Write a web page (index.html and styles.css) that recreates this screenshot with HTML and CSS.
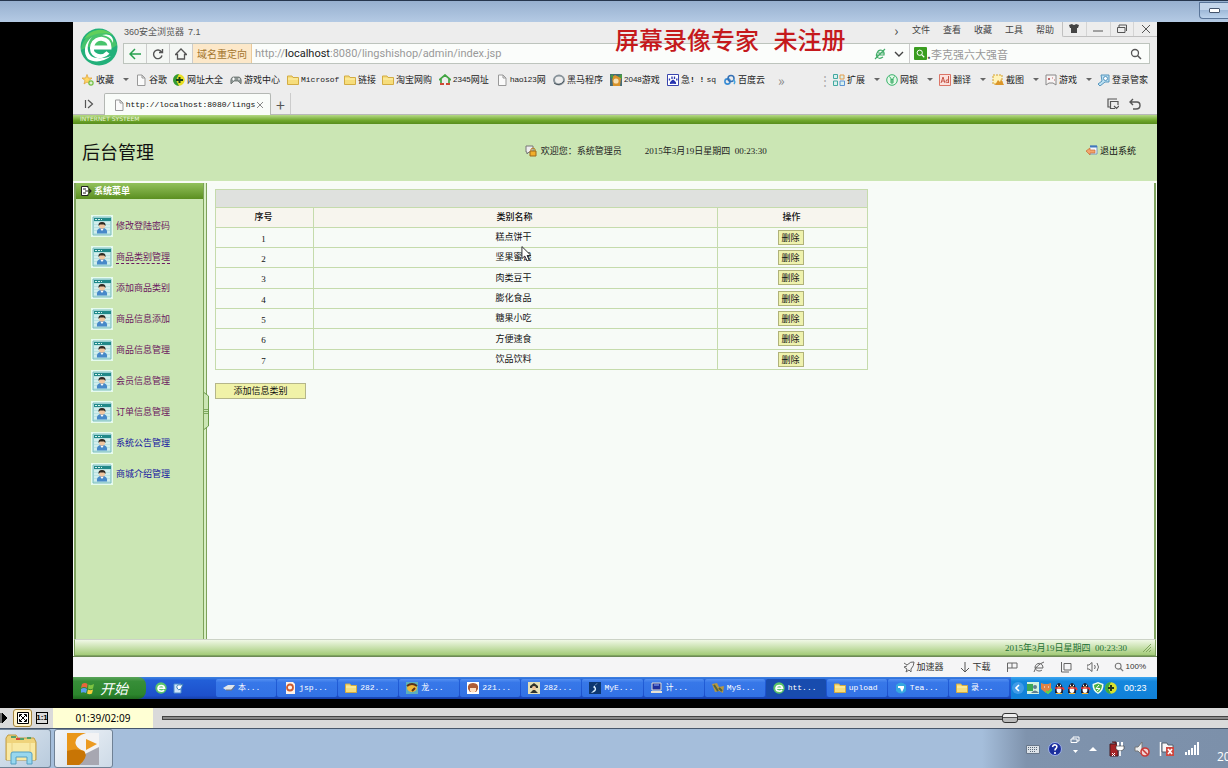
FILE: index.html
```html
<!DOCTYPE html>
<html lang="zh-CN">
<head>
<meta charset="utf-8">
<title>后台管理</title>
<link rel="stylesheet" href="styles.css">
</head>
<body>
<svg class="defs" aria-hidden="true">
  <symbol id="e-logo" viewBox="0 0 38 38"><circle cx="19" cy="19" r="18.500" fill="#22b07a"/><path d="M1 22A18.500 18.500 0 0 1 37 17Q28 24 19 20Q10 16 1 22" fill="#48c46c"/><path d="M4 11A18.500 18.500 0 0 1 33 7Q20 2 4 11" fill="#62cf5c"/><path d="M12 19.500H29.500C30 9 16 8 12.500 17C9 27 21 32 28 24.500" fill="none" stroke="#fff" stroke-width="4"/><path d="M12 9C4 15 3 25 8 31C14 35 24 34 31 28C24 31 15 31 11 28C6 23 7 15 12 9ZM22 7C29 5 34 8 33 15C31 10 28 8 22 7" fill="#fff"/></symbol>
  <symbol id="e-green" viewBox="0 0 12 12"><circle cx="6" cy="6" r="5.700" fill="#5cc46a"/><path d="M3 6.200H9.500C9 2.500 3.500 2.500 3 6.200C3 9.500 7.500 10 9 8" fill="none" stroke="#fff" stroke-width="1.600"/></symbol>
  <symbol id="page" viewBox="0 0 12 12"><path d="M2.500 1H7L10 4V11.500H2.500ZM7 1V4H10" fill="#fafafa" stroke="#999"/></symbol>
  <symbol id="folder" viewBox="0 0 12 12"><path d="M.5 2H5L6 3.500H11.500V10.500H.5Z" fill="#f6dd7c" stroke="#d3ac43"/><path d="M1 5H11" stroke="#fff3b0"/></symbol>
  <symbol id="star" viewBox="0 0 12 12"><path d="M5 .5L6.300 4H10L7 6.500L8 10L5 8L2 10L3 6.500L0 4H3.700Z" fill="#ffd766" stroke="#dc9d32" stroke-width=".7"/><circle cx="9" cy="9" r="2.700" fill="#74c044"/><path d="M7.500 9H10.500M9 7.500V10.500" stroke="#fff"/></symbol>
  <symbol id="dict" viewBox="0 0 12 12"><circle cx="6" cy="6" r="5.700" fill="#e8df23"/><path d="M0 6A6 6 0 0 1 6 0L3 6L6 12A6 6 0 0 1 0 6" fill="#329a36"/><path d="M3 6H10M6.500 3V9" stroke="#163f18" stroke-width="2"/></symbol>
  <symbol id="pad" viewBox="0 0 12 12"><path d="M1 10Q0 4 3 3H9Q12 4 11 10L8 7H4Z" fill="#8f9896" stroke="#59625f" stroke-width=".7"/><path d="M2 5H5M3.500 3.500V6.500M8 5H10" stroke="#fff"/></symbol>
  <symbol id="house" viewBox="0 0 12 12"><path d="M0 6L6 1L12 6M2 5V9M10 5V9" fill="none" stroke="#42a543" stroke-width="1.700"/><path d="M1 10H5M7 10H11" stroke="#cf4a35" stroke-width="2"/></symbol>
  <symbol id="ring" viewBox="0 0 12 12"><ellipse cx="6" cy="6" rx="5" ry="4.400" fill="none" stroke="#89949b" stroke-width="2"/><path d="M1 9Q6 13 11 7" fill="none" stroke="#4d5961"/></symbol>
  <symbol id="g2048" viewBox="0 0 12 12"><path d="M0 0H12V12H0Z" fill="#446b79"/><path d="M2 3L5 1L11 4L10 12H3Z" fill="#d8932b"/><circle cx="6" cy="7" r="2.600" fill="#f8dfb1"/><path d="M0 2L3 0V5M8 2L12 0V5" fill="#4a9b44"/></symbol>
  <symbol id="paw" viewBox="0 0 12 12"><path d="M.5.500H11.500V11.500H.5Z" fill="#fff" stroke="#3945ae"/><path d="M6 5.500Q10 8 9 10Q6 9.500 3 10Q2 8 6 5.500" fill="#2634af"/><path d="M2.500 4.500V6.500M5 2.500V5M7.500 2.500V5M9.800 4.500V6.500" stroke="#2634af" stroke-width="1.300"/></symbol>
  <symbol id="cloud" viewBox="0 0 12 12"><circle cx="3.500" cy="7.500" r="2.600" fill="none" stroke="#3a8dd5" stroke-width="1.600"/><circle cx="7" cy="4.500" r="3" fill="none" stroke="#3570b4" stroke-width="1.500"/><path d="M9 6Q12 7 10 10" fill="none" stroke="#49a5df" stroke-width="1.500"/></symbol>
  <symbol id="ext" viewBox="0 0 12 12"><g fill="#d9f1ef" stroke="#43a9a0"><path d="M.5.500H4.500V4.500H.5ZM.5 7H4.500V11.500H.5Z"/><path d="M7 7H11.500V11.500H7Z" stroke="#5c94d4"/><path d="M7 1H11V5H7Z" stroke="#e49b4b"/></g></symbol>
  <symbol id="yen" viewBox="0 0 12 12"><circle cx="6" cy="6" r="5.300" fill="#e4f8e8" stroke="#3ab36c"/><path d="M3.500 2.500L6 6L8.500 2.500M6 6V10M4 6H8M4 8H8" fill="none" stroke="#30a961"/></symbol>
  <symbol id="trans" viewBox="0 0 12 12"><path d="M.5.500H11.500V11.500H.5Z" fill="#fbe1dd" stroke="#dc7567"/><path d="M2 9L4 3L6 9M3 7H5M9.500 2V9M9.500 6Q7 5 7 7.500Q7 9.500 9.500 8" fill="none" stroke="#c75749"/></symbol>
  <symbol id="snip" viewBox="0 0 12 12"><path d="M1 1H10V10H1Z" fill="#fff3b9" stroke="#d4a031" stroke-dasharray="2 1"/><path d="M3 11L6 6L8 8L9 5L12 11Z" fill="#dc9629"/></symbol>
  <symbol id="joy" viewBox="0 0 12 12"><path d="M1 1H11V11L8 9H4L1 11Z" fill="#f8f4f4" stroke="#888"/><path d="M3 4L5 6M5 4L3 6M7 4H8M9 6H10" stroke="#c26767"/></symbol>
  <symbol id="key" viewBox="0 0 12 12"><path d="M3 1H11V8H7L2 12L0 10L4 7Z" fill="#bce1f3" stroke="#5595bd"/><circle cx="7.500" cy="4.500" r="2" fill="#fff" stroke="#5595bd"/></symbol>
  <symbol id="mag" viewBox="0 0 12 12"><circle cx="5" cy="5" r="3.500" fill="none" stroke="currentColor" stroke-width="1.300"/><path d="M7.500 7.500L11 11" stroke="currentColor" stroke-width="1.500"/></symbol>
  <symbol id="user" viewBox="0 0 22 22"><path d="M0 0H22V22H0Z" fill="#e6fbef"/><path d="M2 2H20V20H2Z" fill="#b9e2e2" stroke="#7dbebf"/><path d="M3 3H20V6H3Z" fill="#218989"/><path d="M4 4.500H11" stroke="#d5f1ed" stroke-dasharray="2 1"/><path d="M3 8H19M3 11H19M3 14H19M3 17H19" stroke="#eafaf7"/><path d="M6 18.500Q5 13 11 13Q17 13 16 18.500Z" fill="#4789c9"/><path d="M9.500 14L11 16L12.500 14" fill="#fff"/><circle cx="11" cy="10.800" r="3" fill="#f1c6a0"/><path d="M7.500 11Q7 7 11 7Q15 7 14.500 11L13 9.500H9Z" fill="#302821"/></symbol>
  <symbol id="peng" viewBox="0 0 12 12"><path d="M2 11Q2 1 6 1Q10 1 10 11Z" fill="#1d1c30"/><ellipse cx="6" cy="8" rx="2.400" ry="3" fill="#fff"/><path d="M4 3.500H5M7 3.500H8" stroke="#fff" stroke-width="1.500"/><path d="M2 6H10L11 8" stroke="#e83838" stroke-width="1.700" fill="none"/><path d="M3 11.500H9M5 5H7" stroke="#f7b52d" stroke-width="1.200"/></symbol>
</svg>

<header class="outer-bar"><button class="outer-min" aria-label="最小化"><i></i></button></header>

<main class="stage">
 <div class="screen">
  <div class="watermark">屏幕录像专家 未注册</div>

  <section class="browser">
   <div class="brow-top">
    <svg class="logo"><use href="#e-logo"/></svg>
    <div class="brow-lines">
     <div class="title-row">
      <span class="app-name"><span class="sim">360</span>安全浏览器  <span class="sim">7.1</span></span>
      <nav class="menu"><button class="chev">›</button><button>文件</button><button>查看</button><button>收藏</button><button>工具</button><button>帮助</button></nav>
      <div class="win-btns">
       <button aria-label="皮肤"><svg viewBox="0 0 10 10"><path d="M0 1L3 0Q5 2 7 0L10 1L9 4H8V9H2V4H1Z" fill="#444"/></svg></button>
       <button aria-label="最小化"><svg viewBox="0 0 10 10"><path d="M0 7H10" stroke="#555"/></svg></button>
       <button aria-label="还原"><svg viewBox="0 0 10 10"><path d="M2 3V1H9.500V7M.5 3.500H8V8.500H.5Z" fill="none" stroke="#555"/></svg></button>
       <button aria-label="关闭"><svg viewBox="0 0 10 10"><path d="M1 1L9 9M9 1L1 9" stroke="#555"/></svg></button>
      </div>
     </div>
     <div class="address">
      <button class="nav-btn" aria-label="后退"><svg viewBox="0 0 12 12"><path d="M12 6H1M6 1L1 6L6 11" fill="none" stroke="#27a04e" stroke-width="1.500"/></svg></button>
      <button class="nav-btn" aria-label="刷新"><svg viewBox="0 0 12 12"><path d="M9.500 4A4.300 4.300 0 1 0 10 7.500M10.500 1V4.500H7" fill="none" stroke="#555" stroke-width="1.400"/></svg></button>
      <button class="nav-btn" aria-label="主页"><svg viewBox="0 0 12 12"><path d="M.5 6.500L6 1L11.500 6.500H9.500V11H2.500V6.500Z" fill="none" stroke="#555" stroke-width="1.300"/></svg></button>
      <span class="redirect">域名重定向</span>
      <span class="url">http://<b>localhost</b>:8080/lingshishop/admin/index.jsp</span>
      <svg class="i12" viewBox="0 0 12 12"><path d="M2 7H10C11 2 5 0 3 5C1 9 5 12 9 9M1 11L11 1M4 5H10" fill="none" stroke="#43ad69" stroke-width="1.200"/></svg>
      <button class="drop" aria-label="展开"><svg viewBox="0 0 10 10"><path d="M1 3L5 7L9 3" fill="none" stroke="#444" stroke-width="1.400"/></svg></button>
      <div class="search"><span class="s-icon"><svg><use href="#mag"/></svg></span><i>.</i><input type="text" aria-label="搜索" placeholder="李克强六大强音"><button aria-label="搜索"><svg><use href="#mag"/></svg></button></div>
     </div>
    </div>
   </div>

   <div class="marks">
    <a class="w2 fav"><svg><use href="#star"/></svg>收藏<em></em></a>
    <a class="w2"><svg><use href="#page"/></svg>谷歌</a>
    <a class="w4"><svg><use href="#dict"/></svg>网址大全</a>
    <a class="w4"><svg><use href="#pad"/></svg>游戏中心</a>
    <a class="w4"><svg><use href="#folder"/></svg><span class="mono">Microsof</span></a>
    <a class="w2"><svg><use href="#folder"/></svg>链接</a>
    <a class="w4"><svg><use href="#folder"/></svg>淘宝网购</a>
    <a class="w4"><svg><use href="#house"/></svg><span class="sim">2345</span>网址</a>
    <a class="w4"><svg><use href="#page"/></svg><span class="sim">hao123</span>网</a>
    <a class="w4"><svg><use href="#ring"/></svg>黑马程序</a>
    <a class="w4"><svg><use href="#g2048"/></svg><span class="sim">2048</span>游戏</a>
    <a class="w4"><svg><use href="#paw"/></svg>急<b class="mono">! !</b>&nbsp;<span class="mono">sq</span></a>
    <a class="w3"><svg><use href="#cloud"/></svg>百度云</a>
    <a class="more">»</a>
    <span class="tools">
     <span class="dots">⋮</span>
     <a class="tool"><svg><use href="#ext"/></svg>扩展<em></em></a>
     <a class="tool"><svg><use href="#yen"/></svg>网银<em></em></a>
     <a class="tool"><svg><use href="#trans"/></svg>翻译<em></em></a>
     <a class="tool"><svg><use href="#snip"/></svg>截图<em></em></a>
     <a class="tool"><svg><use href="#joy"/></svg>游戏<em></em></a>
     <a class="login"><svg><use href="#key"/></svg>登录管家</a>
    </span>
   </div>

   <div class="tabs">
    <button class="side" aria-label="侧栏"><svg viewBox="0 0 10 10"><path d="M1.500 1V9M4 1L8.500 5L4 9" fill="none" stroke="#555" stroke-width="1.200"/></svg></button>
    <div class="tab"><svg class="i12"><use href="#page"/></svg><span class="mono">http://localhost:8080/lings</span><button aria-label="关闭标签"><svg viewBox="0 0 8 8"><path d="M1 1L7 7M7 1L1 7" stroke="#888"/></svg></button></div>
    <button class="plus" aria-label="新标签">+</button>
    <span class="tab-tools">
     <svg class="i12" viewBox="0 0 12 12"><path d="M3 9H1V1H10M11 7V3.500H3.500V10.500H8M7 8L9.500 10.500L12 8" fill="none" stroke="#555" stroke-width="1.200"/></svg>
     <svg class="i12" viewBox="0 0 12 12"><path d="M4 1L1 4L4 7M1 4H8Q11 4 11 7.500Q11 11 7 11H4" fill="none" stroke="#555" stroke-width="1.400"/></svg>
    </span>
   </div>
  </section>

  <section class="page">
   <div class="strip"><span>INTERNET SYSTEEM</span></div>
   <header class="page-head">
    <h1>后台管理</h1>
    <p class="hello"><svg class="i12" viewBox="0 0 12 12"><path d="M1 1H8V7H4L2 9V7H1Z" fill="#eee" stroke="#777"/><path d="M6 6V4Q8 2 10 4V6" fill="none" stroke="#b57a1d"/><path d="M5 6H11V11H5Z" fill="#f1ae2b" stroke="#9d681b"/></svg>欢迎您：系统管理员</p>
    <time>2015年3月19日星期四 &nbsp;00:23:30</time>
    <a class="logout" href="#"><svg class="i12" viewBox="0 0 12 12"><path d="M4 1H11V9H4" fill="#f4f8ff" stroke="#7798bd"/><path d="M4 1.500H11" stroke="#4078bd" stroke-width="2"/><path d="M0 6L4 3V5H9V8H4V10Z" fill="#f3a56b" stroke="#c66c37" stroke-width=".7"/></svg>退出系统</a>
   </header>
   <div class="page-body">
    <aside class="sidebar">
     <h2><svg class="i12" viewBox="0 0 12 12"><path d="M8 3V1.500H1.500V10.500H8V9" fill="#fff" stroke="#222"/><path d="M3 4H6M3 8H6M5 6H11M8.500 3.500L11 6L8.500 8.500" fill="none" stroke="#222" stroke-width="1.200"/></svg>系统菜单</h2>
     <ul>
      <li><a href="#"><svg><use href="#user"/></svg>修改登陆密码</a></li>
      <li><a href="#" class="on"><svg><use href="#user"/></svg><span>商品类别管理</span></a></li>
      <li><a href="#"><svg><use href="#user"/></svg>添加商品类别</a></li>
      <li><a href="#"><svg><use href="#user"/></svg>商品信息添加</a></li>
      <li><a href="#"><svg><use href="#user"/></svg>商品信息管理</a></li>
      <li><a href="#"><svg><use href="#user"/></svg>会员信息管理</a></li>
      <li><a href="#"><svg><use href="#user"/></svg>订单信息管理</a></li>
      <li><a href="#" class="new"><svg><use href="#user"/></svg>系统公告管理</a></li>
      <li><a href="#" class="new"><svg><use href="#user"/></svg>商城介绍管理</a></li>
     </ul>
    </aside>
    <div class="split"><svg viewBox="0 0 5 38"><path d="M0 .5L4.500 4V34L0 37.500" fill="#cbe6b4" stroke="#6a9a4a"/><path d="M0 17.500H4M0 19.500H4M0 21.500H4" stroke="#6a9a4a" stroke-width=".8"/></svg></div>
    <div class="content">
     <table>
      <colgroup><col class="c1"><col class="c2"><col class="c3"></colgroup>
      <thead>
       <tr class="bar"><td colspan="3"></td></tr>
       <tr class="cols"><th>序号</th><th>类别名称</th><th>操作</th></tr>
      </thead>
      <tbody>
       <tr><td>1</td><td>糕点饼干</td><td><button>删除</button></td></tr>
       <tr><td>2</td><td><span class="pointed">坚果蜜饯<svg viewBox="0 0 9 14"><path d="M.5.500V11L3 8.800L5 13L6.800 12.200L5 8.300H8.400Z" fill="#fff" stroke="#222" stroke-width=".8"/></svg></span></td><td><button>删除</button></td></tr>
       <tr><td>3</td><td>肉类豆干</td><td><button>删除</button></td></tr>
       <tr><td>4</td><td>膨化食品</td><td><button>删除</button></td></tr>
       <tr><td>5</td><td>糖果小吃</td><td><button>删除</button></td></tr>
       <tr><td>6</td><td>方便速食</td><td><button>删除</button></td></tr>
       <tr><td>7</td><td>饮品饮料</td><td><button>删除</button></td></tr>
      </tbody>
     </table>
     <button class="add">添加信息类别</button>
    </div>
   </div>
   <footer class="page-foot"><time>2015年3月19日星期四 &nbsp;00:23:30</time><svg viewBox="0 0 8 8"><path d="M0 8L8 0M3 8L8 3M6 8L8 6" stroke="#80a65c"/></svg></footer>
  </section>

  <div class="status">
   <span><svg viewBox="0 0 12 12"><path d="M1 2L4 4Q8 0 11 1Q11 5 8 8V11L6 9L3 11L4 8L1 6L4 5" fill="none" stroke="#666"/></svg>加速器</span>
   <span><svg viewBox="0 0 12 12"><path d="M6 1V11M2 7L6 11L10 7" fill="none" stroke="#555"/></svg>下载</span>
   <svg viewBox="0 0 12 12"><path d="M1.500 11V2H11V7H2M6 2V7" fill="none" stroke="#666"/></svg>
   <svg viewBox="0 0 12 12"><path d="M2 7H10C10 1 3 1 2 6C2 10 7 11 9 9M1 11Q3 4 11 1" fill="none" stroke="#666"/></svg>
   <svg viewBox="0 0 12 12"><path d="M4 2.500H11V9H4ZM1.500 1V11H9" fill="none" stroke="#666"/></svg>
   <svg viewBox="0 0 12 12"><path d="M0 4H2L5 1.500V10.500L2 8H0ZM7.500 4Q9 6 7.500 8M10 2Q13 6 10 10" fill="none" stroke="#666"/></svg>
   <span class="pct"><svg><use href="#mag"/></svg>100%</span>
  </div>

  <div class="xp">
   <button class="start"><svg viewBox="0 0 14 14"><path d="M1 3Q4 1 6.500 3L6 7Q3 5 0 7Z" fill="#e9663b"/><path d="M7.500 3.500Q10 5 13 3L12 7.500Q9.500 9 7 7.500Z" fill="#7fc442"/><path d="M0 8Q3 6 6 8L5 12Q2.500 10.500-1 12Z" fill="#58a1ef"/><path d="M7 8.500Q9 10 12 8.500L11 12.500Q8.500 14 6 12.500Z" fill="#f6ce3a"/></svg>开始</button>
   <div class="quick"><svg><use href="#e-green"/></svg><svg viewBox="0 0 12 12"><path d="M2 2H9V11H2Z" fill="#cfe6fa" stroke="#5290cc"/><path d="M9 3Q4 2 5 6Q6 9 9 7L11 2Z" fill="#fff" stroke="#397fba"/></svg></div>
   <div class="tasks">
    <button><svg viewBox="0 0 12 12"><path d="M0 6L5 3H12L8 8H3Z" fill="#e0e6ea"/><path d="M3 8H9L12 4" stroke="#777" fill="none"/></svg>本...</button>
    <button><svg viewBox="0 0 12 12"><path d="M2 0H9L11 2V12H2Z" fill="#fff3e8"/><circle cx="6" cy="5.500" r="3" fill="none" stroke="#cd5b2f" stroke-width="1.800"/></svg>jsp...</button>
    <button><svg><use href="#folder"/></svg>282...</button>
    <button><svg viewBox="0 0 12 12"><path d="M0 0H12V12H0Z" fill="#5cafbd"/><ellipse cx="6" cy="6" rx="5" ry="4" fill="#f0b83a"/><path d="M1 4Q6 0 11 4M6 9L9 6" fill="none" stroke="#5b3319" stroke-width="2"/></svg>龙...</button>
    <button><svg viewBox="0 0 12 12"><path d="M0 0H12V12H0Z" fill="#fff"/><path d="M1 7Q0 1 6 1Q12 1 11 7L9 10H3Z" fill="#ad5c37"/><path d="M3 6H9V9Q6 12 3 9Z" fill="#ffe0c2"/></svg>221...</button>
    <button><svg viewBox="0 0 12 12"><path d="M0 0H12V12H0Z" fill="#e6e0b6"/><path d="M2 4L6 1L10 4V6H2ZM2 11L5 8H7L10 11Z" fill="#31342d"/><circle cx="6" cy="6" r="2" fill="#f2c69c"/></svg>282...</button>
    <button><svg viewBox="0 0 12 12"><path d="M0 0H12V12H0Z" fill="#0d3770"/><path d="M9 1Q4 3 7 6Q8 10 2 11L6 7L4 5Z" fill="#dbefff"/></svg>MyE...</button>
    <button><svg viewBox="0 0 12 12"><path d="M1 1H10V8H1Z" fill="#202f9b" stroke="#e7e2d2"/><path d="M0 10H11" stroke="#e7e2d2" stroke-width="2"/><path d="M3 3H8" stroke="#8fb2ff"/></svg>计...</button>
    <button><svg viewBox="0 0 12 12"><path d="M0 2L5 1L7 5L12 4L11 11L7 9L3 10Z" fill="#b79940"/><path d="M2 3L6 9M7 6L10 9" stroke="#54633b" stroke-width="2"/></svg>MyS...</button>
    <button class="active"><svg><use href="#e-green"/></svg>htt...</button>
    <button><svg><use href="#folder"/></svg>upload</button>
    <button><svg viewBox="0 0 12 12"><path d="M1 3Q6-2 11 3V9Q6 14 1 9Z" fill="#35a7de"/><path d="M3 4H9V6H3ZM5 6H9L7 10Z" fill="#fff"/></svg>Tea...</button>
    <button><svg><use href="#folder"/></svg>录...</button>
   </div>
   <div class="xp-tray">
    <button class="back" aria-label="显示图标"><svg viewBox="0 0 12 12"><path d="M7 3L4 6L7 9" fill="none" stroke="#fff" stroke-width="1.600"/></svg></button>
    <svg viewBox="0 0 12 12"><path d="M0 0H12V12H0Z" fill="#d5f2de"/><path d="M0 2H6V9H0Z" fill="#3ca856"/><circle cx="8" cy="5" r="2" fill="#607e90"/><path d="M4 11Q8 6 12 11" fill="#607e90"/></svg>
    <svg viewBox="0 0 12 12"><path d="M1 1L4 2H8L11 1V7L6 11L1 7Z" fill="#e18344"/><path d="M4 5H5M8 5H9" stroke="#fff"/><path d="M6 9L8 11L12 7" fill="none" stroke="#61d34b" stroke-width="2"/></svg>
    <svg><use href="#peng"/></svg><svg><use href="#peng"/></svg><svg><use href="#peng"/></svg>
    <svg viewBox="0 0 12 12"><path d="M6 0L11.500 2Q12 9 6 12Q0 9 .5 2Z" fill="#f4fff0"/><path d="M6 1.500L10 3Q10 8 6 10.500Q2 8 2 3Z" fill="#4aaf47"/><path d="M7 3L4 6.500H8L5 9" fill="none" stroke="#fff"/></svg>
    <svg viewBox="0 0 12 12"><circle cx="6" cy="6" r="5.800" fill="#d9e22d"/><path d="M6 0A6 6 0 0 0 6 12L3 6Z" fill="#3ba943"/><path d="M3 6H9M6 3V9" stroke="#263817" stroke-width="2"/></svg>
    <time>00:23</time>
   </div>
  </div>
 </div>
</main>

<div class="player">
 <button aria-label="播放"><svg viewBox="0 0 8 12"><path d="M0 1V11M2 1L7 6L2 11Z" fill="#000" stroke="#000"/></svg></button>
 <button class="fit" aria-label="适应窗口"><svg viewBox="0 0 12 12"><path d="M.5.500H11.500V11.500H.5Z" fill="#fff" stroke="#000"/><path d="M3 3L9 9M9 3L3 9M2.500 5V2.500H5M7 2.500H9.500V5M9.500 7V9.500H7M5 9.500H2.500V7" fill="none" stroke="#000"/></svg></button>
 <button class="one">1:1</button>
 <output>01:39/02:09</output>
 <input type="range" min="0" max="1000" value="800" aria-label="播放进度">
</div>

<footer class="dock">
 <button class="app" aria-label="资源管理器"><svg viewBox="0 0 34 32"><path d="M2 5L4 2H12L14 5H30L32 9V27H2Z" fill="#efd37b" stroke="#bf9b44"/><path d="M7 4H12M15 6H20M23 5H27" stroke="#56a16b" stroke-width="2"/><path d="M12 6H16" stroke="#d54b3c" stroke-width="2"/><path d="M3 10H31V27H3Z" fill="#f9e9a4"/><path d="M8 10V26M26 10V26" stroke="#ead080"/><path d="M7 31V21Q7 19 9 19H25Q28 19 28 21V31H23V24H12V31Z" fill="#98d7ef" stroke="#559fc3"/></svg></button>
 <button class="app wide" aria-label="播放器"><svg viewBox="0 0 32 32"><path d="M0 0H32V32H0Z" fill="#f3f3f4"/><path d="M16 22L32 14V32H12Z" fill="#a7a7b1"/><path d="M0 0H19Q6 4 9 12Q11 16 17 18Q21 24 12 32H0Z" fill="#e99619"/><path d="M0 18Q8 15 17 18Q22 24 12 32H0Z" fill="#c87505"/><path d="M19 6L30 11L19 17Z" fill="#ec9b22"/></svg></button>
 <div class="tray">
  <svg class="t14" viewBox="0 0 14 14"><path d="M.5 3.500H13.500V11.500H.5Z" fill="#dce2e8" stroke="#68778a"/><path d="M2 5.500H12M2 7.500H12M4 9.500H10" stroke="#59687a" stroke-dasharray="1 1"/></svg>
  <svg class="t14" viewBox="0 0 14 14"><circle cx="7" cy="7" r="6.500" fill="#1b2e9d" stroke="#9db1e8"/><path d="M4.500 5Q5 2.500 7.500 3Q10 4 8 6.500Q7 7 7 8.500M7 10V12" fill="none" stroke="#fff" stroke-width="1.600"/></svg>
  <svg class="lang" viewBox="0 0 10 18"><path d="M3 3V1H9V5H7M1 3H7V6.500H1Z" fill="none" stroke="#fff"/><path d="M3 14H8L5.500 17Z" fill="#fff"/></svg>
  <svg class="up" viewBox="0 0 8 8"><path d="M0 6L4 2L8 6Z" fill="#fff"/></svg>
  <svg class="t16" viewBox="0 0 16 16"><path d="M1 3H9V15H1ZM3 1H7V3" fill="#a52427" stroke="#471d23"/><path d="M9 1V5M13 1V5" stroke="#fff" stroke-width="2"/><path d="M7 5H15V8Q11 12 7 8Z" fill="#fff" stroke="#333" stroke-width=".6"/><path d="M11 10V15" stroke="#fff" stroke-width="1.600"/><path d="M3 12L6 15M6 12L3 15" stroke="#fff"/></svg>
  <svg class="t16" viewBox="0 0 16 16"><path d="M1 6H4L8 1V14L4 10H1Z" fill="#eee" stroke="#777"/><circle cx="11" cy="11" r="4" fill="#f2d5d4" stroke="#c83a38" stroke-width="1.600"/><path d="M8 8L14 14" stroke="#c83a38" stroke-width="1.600"/></svg>
  <svg class="t16" viewBox="0 0 16 16"><path d="M1.500 1V15" stroke="#fff" stroke-width="1.500"/><path d="M3 2H8L9 4H14V11H3Z" fill="#f6f6f8" stroke="#56606d"/><path d="M7 6H15V15H7Z" fill="#cf4840"/><path d="M9 8L13 13M13 8L9 13" stroke="#fff" stroke-width="1.600"/></svg>
  <svg class="t16" viewBox="0 0 16 16"><path d="M2 14V11M5 14V9M8 14V7M11 14V4M14 14V1" stroke="#fff" stroke-width="2"/></svg>
  <time>20</time>
 </div>
</footer>
</body>
</html>
```
FILE: styles.css
```css
* { box-sizing: border-box; }
body {
  margin: 0;
  height: 100vh;
  display: flex;
  flex-direction: column;
  overflow: hidden;
  background: #000;
  color: #222;
  font: 9px/12px "Noto Sans CJK SC", sans-serif;
}
button, input { font: inherit; color: inherit; padding: 0; margin: 0; border: 0; background: none; }
h1, h2, p, ul { margin: 0; padding: 0; font-weight: normal; }
ul { list-style: none; }
a { color: inherit; text-decoration: none; }
svg { display: block; flex: none; width: 12px; height: 12px; }
.defs { position: absolute; width: 0; height: 0; }
.i12 { width: 12px; height: 12px; }
.sim { font-family: "Liberation Sans", sans-serif; font-size: 8px; }
.mono { font-family: "Liberation Mono", monospace; font-size: 8px; }

/* outer window */
.outer-bar {
  flex: none;
  height: 22px;
  border-top: 1px solid #26364d;
  background: linear-gradient(#97b0cf, #b4cae4);
  display: flex;
  justify-content: flex-end;
}
.outer-min {
  width: 29px;
  height: 17px;
  margin-top: 1px;
  border: 1px solid #5a7599;
  border-right: 0;
  border-radius: 0 0 0 4px;
  background: linear-gradient(#c3d5ea 50%, #9fb9d8 50%, #bcd3ec);
  display: flex;
  justify-content: center;
  align-items: center;
}
.outer-min i { width: 11px; height: 5px; border: 1px solid #44546c; background: #fff; border-radius: 1px; }

.stage { flex: 1; min-height: 0; display: flex; padding: 0 71px 9px 73px; }
.screen { position: relative; flex: 1; min-width: 0; display: flex; flex-direction: column; background: #f7fbf6; }
.watermark {
  position: absolute;
  left: 50%;
  top: 5px;
  font: 500 24px/32px "Liberation Mono", "Noto Sans CJK SC", monospace;
  color: #c5191c;
  white-space: nowrap;
}

/* browser chrome */
.browser { flex: none; background: #ededed; }
.brow-top { display: flex; padding: 0 7px 0 7px; gap: 5px; }
.logo { width: 38px; height: 38px; margin-top: 6px; }
.brow-lines { flex: 1; min-width: 0; }
.title-row { display: flex; height: 21px; align-items: flex-start; margin-right: -7px; }
.app-name { padding: 4px 0 0 1px; color: #555; white-space: pre; }
.app-name .sim { font-size: 9px; }
.menu { margin-left: auto; display: flex; gap: 13px; padding: 2px 8px 0 0; color: #444; }
.menu button { height: 12px; }
.menu .chev { font-size: 14px; line-height: 10px; width: 5px; }
.win-btns { display: flex; width: 95px; height: 15px; border: 1px solid #c0c0c0; border-width: 0 0 1px 1px; border-radius: 0 0 0 2px; }
.win-btns button { flex: 1; display: flex; justify-content: center; align-items: center; }
.win-btns button + button { border-left: 1px solid #d4d4d4; }
.win-btns svg { width: 10px; height: 10px; }
.address { display: flex; align-items: center; height: 21px; background: #fbfdfb; border: 1px solid #bdc4bd; }
.nav-btn { width: 23px; height: 19px; border-right: 1px solid #ccc; background: #f4f7f4; display: flex; justify-content: center; align-items: center; }
.redirect { align-self: stretch; flex: none; padding: 0 4px; background: #fce8c9; border-right: 1px solid #eac99a; color: #a4762f; font-size: 10px; line-height: 19px; }
.url { flex: 1; min-width: 0; padding-left: 3px; font: 11px/19px Roboto, sans-serif; color: #999; white-space: nowrap; overflow: hidden; }
.url b { font-weight: normal; color: #222; }
.drop { width: 22px; height: 19px; margin-left: 2px; border-right: 1px solid #ccc; display: flex; justify-content: center; align-items: center; }
.drop svg { width: 10px; height: 10px; }
.search { width: 239px; padding: 0 7px 0 4px; display: flex; align-items: center; color: #555; }
.search input { flex: 1; min-width: 0; height: 19px; font-size: 11px; outline: 0; }
.search input::placeholder { color: #999; opacity: 1; }
.search i { font-size: 12px; font-style: normal; font-weight: bold; width: 4px; }
.s-icon { width: 13px; height: 13px; display: flex; justify-content: center; align-items: center; background: #3a9d20; color: #fff; border-radius: 1px; }
.s-icon svg { width: 9px; height: 9px; }
.marks { display: flex; align-items: center; height: 27px; padding: 0 9px; white-space: nowrap; }
.marks a { display: flex; align-items: center; flex: none; }
.marks a > svg { margin-right: 2px; }
.marks .w2 { width: 38px; }
.marks .w3 { width: 51px; }
.marks .w4 { width: 57px; }
.marks .w2.fav { width: 53px; }
em { width: 0; border: 3px solid transparent; border-top-color: #666; border-bottom: 0; margin-left: 9px; }
.marks .more { color: #888; font-size: 14px; margin-left: 3px; }
.tools { margin-left: auto; display: flex; align-items: center; }
.dots { width: 14px; color: #aaa; font-size: 12px; }
.marks .tool { width: 53px; }
.tabs { display: flex; height: 22px; border-bottom: 1px solid #b8b8b8; }
.side { width: 31px; display: flex; justify-content: center; align-items: center; }
.side svg { width: 10px; height: 10px; }
.tab { width: 167px; height: 22px; padding: 0 6px 0 8px; display: flex; align-items: center; justify-content: space-between; background: #f9fcf9; border: 1px solid #b4b8b4; border-bottom: 0; border-radius: 2px 2px 0 0; }
.tab span { white-space: nowrap; color: #111; }
.tab button svg { width: 8px; height: 8px; }
.plus { width: 20px; border-right: 1px solid #ccc; color: #555; font-size: 16px; }
.tab-tools { margin-left: auto; padding-right: 16px; display: flex; align-items: center; gap: 10px; }

/* admin page */
.page { flex: 1; min-height: 0; display: flex; flex-direction: column; border-bottom: 1px solid #6c8a56; }
.strip { flex: none; height: 9px; overflow: hidden; padding-left: 7px; background: linear-gradient(#b5da86, #6fa72c 60%, #578d1c); color: #eaf6da; font: 6px/7px "DejaVu Sans", sans-serif; }
.page-head { flex: none; height: 59px; padding: 0 21px 3px 9px; background: #cbe6b4; border-bottom: 2px solid #f9fcf7; display: flex; align-items: center; }
.page-head h1 { flex: 0 0 42%; font-size: 18px; line-height: 24px; color: #111; }
.hello, .logout { display: flex; align-items: center; gap: 4px; }
.hello { width: 120px; white-space: nowrap; }
time { font-family: "Liberation Serif", "Noto Sans CJK SC", serif; white-space: nowrap; }
.logout { margin-left: auto; gap: 2px; color: #111; }
.page-body { flex: 1; min-height: 0; display: flex; border: 1px solid #7fa35f; border-width: 0 2px; margin: 0 1px; }
.sidebar { width: 128px; background: #cbe6b4; border-right: 1px solid #7da25a; }
.sidebar h2 { height: 16px; padding-left: 4px; display: flex; align-items: center; gap: 2px; background: linear-gradient(#92c15c, #5b8f20); color: #fff; font-weight: bold; font-size: 9px; }
.sidebar ul { padding: 16px 0 0 15px; display: grid; gap: 9px; }
.sidebar a { display: flex; align-items: center; gap: 3px; color: #6c1860; }
.sidebar svg { width: 22px; height: 22px; }
.sidebar h2 svg { width: 12px; height: 12px; }
.sidebar a.new { color: #1414a0; }
.sidebar .on span { border-bottom: 1px dashed #6c1860; }
.split { width: 3px; background: #d8efc4; border-right: 1px solid #7da25a; display: flex; align-items: center; }
.split svg { position: relative; width: 5px; height: 38px; }
.content { flex: 1; min-width: 0; padding: 6px 8px; background: #f7fbf7; }
table { width: 100%; max-width: 653px; table-layout: fixed; border-collapse: collapse; color: #111; }
.c1 { width: 15%; }
.c3 { width: 23%; }
td, th { height: 20px; padding: 0; border: 1px solid #c5dbac; text-align: center; font-weight: normal; line-height: 12px; }
tbody tr:nth-child(3n) td { height: 21px; }
tbody td { padding: 0 4px 1px 0; }
tbody td:first-child { font-family: "Liberation Serif", serif; padding: 2px 2px 0 0; }
.bar td { height: 18px; background: #dfe1de; }
.cols th { background: #f7f5ee; font-weight: 500; padding: 0 2px 2px 0; }
td button { display: block; margin: 0 auto; width: 26px; height: 15px; line-height: 11px; border: 1px solid #b0b27a; background: #eff2ae; }
.pointed { position: relative; }
.pointed svg { position: absolute; right: -1px; top: -4px; width: 11px; height: 16px; }
.add { margin-top: 13px; width: 91px; height: 16px; line-height: 12px; border: 1px solid #b5b68a; background: #f0f2a8; color: #111; display: block; }
.page-foot { flex: none; height: 17px; margin: 0 1px; padding: 0 4px 0 0; display: flex; align-items: center; justify-content: flex-end; gap: 16px; border: 1px solid #7fa35f; border-top-color: #ccd3c6; background: linear-gradient(#f0f8e6, #a3cb78); color: #237034; }
.page-foot svg { width: 8px; height: 8px; }

.status { flex: none; height: 20px; padding-right: 11px; background: #f5f5f6; display: flex; align-items: center; justify-content: flex-end; gap: 15px; color: #333; }
.status span { display: flex; align-items: center; gap: 2px; }
.status .pct { font-family: "Liberation Sans", sans-serif; font-size: 8px; }
.status .pct svg { width: 10px; height: 10px; color: #777; }

/* recorded desktop taskbar */
.xp { flex: none; height: 22px; display: flex; background: linear-gradient(#3f83e0, #225fd8 15%, #1d50cb 85%, #163ea6); color: #fff; }
.start { width: 73px; display: flex; align-items: center; gap: 5px; padding-left: 8px; border-radius: 0 8px 8px 0; background: linear-gradient(#5aa45a, #378e38 20%, #2c852d 80%, #1f691f); font-size: 14px; font-style: italic; line-height: 20px; }
.start svg { width: 14px; height: 14px; }
.quick { width: 70px; padding-left: 9px; display: flex; align-items: center; gap: 5px; }
.tasks { flex: 1; min-width: 0; display: flex; gap: 1px; padding: 2px 0; }
.tasks button { flex: 1; min-width: 0; display: flex; align-items: center; gap: 3px; padding-left: 7px; background: linear-gradient(#5490f2, #3777e8 20%, #3272e5); border-radius: 2px; font-family: "Liberation Mono", "Noto Sans CJK SC", monospace; font-size: 8px; overflow: hidden; white-space: nowrap; }
.tasks .active { background: #184cae; }
.xp-tray { margin-left: 2px; width: 146px; padding-left: 1px; display: flex; align-items: center; gap: 1px; background: linear-gradient(#3ca5f0, #1487dd 20%, #1080d8); }
.back { width: 12px; height: 12px; margin-right: 2px; border-radius: 6px; background: #3f9be8; }
.xp-tray time { margin-left: 6px; font: 9px/12px "Liberation Sans", sans-serif; }

/* video controls */
.player { flex: none; height: 21px; display: flex; align-items: center; background: #dadada; color: #000; border-bottom: 1px solid #46566c; }
.player > button { display: flex; justify-content: center; align-items: center; flex: none; }
.player button:first-child { width: 12px; justify-content: flex-start; }
.player button:first-child svg { width: 8px; }
.player .fit { width: 19px; height: 18px; margin: 0 4px 0 1px; border: 1px solid #a28239; border-radius: 3px; background: #fff3cc; }
.player .one { width: 12px; height: 12px; border: 1px solid #000; font: bold 8px/10px "Liberation Sans", sans-serif; }
.player output { width: 100px; margin-left: 5px; align-self: stretch; background: #ffffd4; text-align: center; font: 10px/20px "Noto Sans", sans-serif; }
.player input { flex: 1; min-width: 0; margin-left: 9px; height: 12px; appearance: none; }
.player input::-webkit-slider-runnable-track { height: 4px; background: #8a8a8a; border: 1px solid #444; border-right: 0; }
.player input::-webkit-slider-thumb { appearance: none; width: 16px; height: 10px; margin-top: -4px; border: 1px solid #333; border-radius: 3px; background: linear-gradient(#eee 40%, #555 40%, #555 55%, #bbb 55%); }

.dock { flex: none; height: 39px; display: flex; background: #a5bedb; overflow: hidden; }
.app { width: 51px; height: 39px; padding-right: 8px; margin-right: 3px; flex: none; display: flex; justify-content: center; align-items: center; border: 1px solid #6f8195; border-left: 0; border-radius: 0 3px 3px 0; background: linear-gradient(135deg, #dbe5ef, #b9cbdd); }
.app svg { width: 34px; height: 32px; }
.app.wide { width: 59px; padding-right: 2px; border-left: 1px solid #6f8195; border-radius: 3px; background: linear-gradient(135deg, #f3f6fa, #cddae7); }
.app.wide svg { width: 32px; }
.tray { margin-left: auto; width: 246px; padding-left: 44px; display: flex; align-items: center; background: linear-gradient(90deg, #a5bedb, #7f93ad 18%, #7c90aa); color: #fff; flex: none; }
.tray svg { margin-right: 9px; }
.t14 { width: 14px; height: 14px; }
.tray .t14 { margin-right: 8px; }
.lang { width: 10px; height: 18px; align-self: flex-start; margin-top: 7px; }
.up { width: 8px; height: 8px; }
.t16 { width: 16px; height: 16px; }
.tray .up { margin-right: 12px; }
.tray time { font: 12px/16px "Open Sans", sans-serif; align-self: flex-end; margin: 0 0 3px 8px; }
```
